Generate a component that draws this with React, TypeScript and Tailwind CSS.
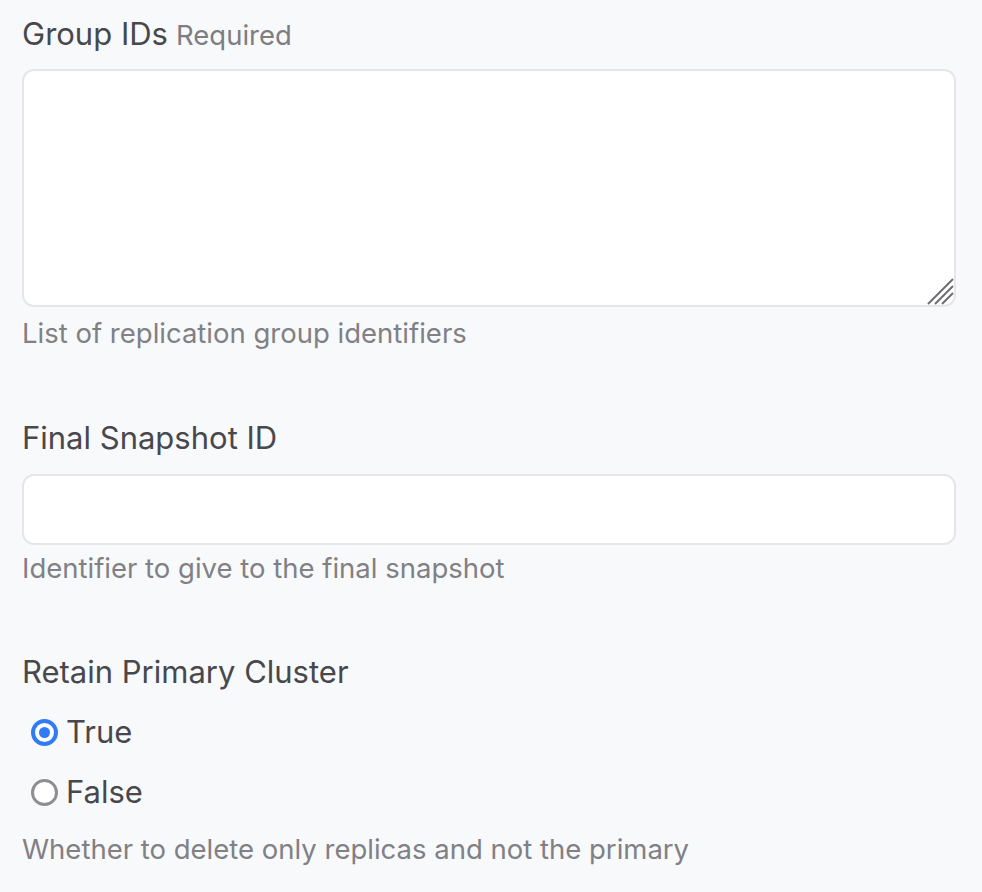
import React from "react";

export default function App() {
  return (
    <div
      className="min-h-[892px] w-full bg-[#f8f9fb] pl-[22px] pr-[26px] pt-[14px] pb-[20px] text-[#48484c]"
      style={{ fontFamily: "Inter, 'Noto Sans', sans-serif" }}
    >
      {/* Group IDs */}
      <div className="flex h-[40px] items-center gap-[8px]">
        <span className="text-[31px] leading-[40px]">Group IDs</span>
        <span className="mt-[2px] text-[27.5px] leading-[40px] text-[#7d7d82]">Required</span>
      </div>
      <div className="relative mt-[15px]">
        <textarea className="block h-[238px] w-full resize-none rounded-[12px] border-2 border-[#e6e6ea] bg-white outline-none" />
        <svg className="pointer-events-none absolute right-[2px] bottom-[2px]" width="28" height="28" viewBox="0 0 28 28">
          <path d="M2 27 L27 2 M9 27 L27 9 M16 27 L27 16" stroke="#6e6e72" strokeWidth="2" />
        </svg>
      </div>
      <p className="mt-[8px] h-[36px] text-[27.5px] leading-[36px] text-[#808085]">List of replication group identifiers</p>

      {/* Final Snapshot ID */}
      <div className="mt-[67px] h-[40px] text-[31px] leading-[40px]">Final Snapshot ID</div>
      <input className="mt-[16px] block h-[71px] w-full rounded-[12px] border-2 border-[#e6e6ea] bg-white outline-none" />
      <p className="mt-[5px] h-[36px] text-[27.5px] leading-[36px] text-[#808085]">Identifier to give to the final snapshot</p>

      {/* Retain Primary Cluster */}
      <div className="mt-[66px] h-[40px] text-[31px] leading-[40px]">Retain Primary Cluster</div>
      <div className="mt-[10px] flex flex-col">
        <label className="flex h-[60px] items-center gap-[8px] pl-[9px]">
          <span className="flex h-[27px] w-[27px] items-center justify-center rounded-full border-[4px] border-[#2f7cf6] bg-white">
            <span className="h-[11px] w-[11px] rounded-full bg-[#2f7cf6]" />
          </span>
          <span className="text-[31px] leading-[40px]">True</span>
        </label>
        <label className="flex h-[60px] items-center gap-[8px] pl-[9px]">
          <span className="h-[27px] w-[27px] rounded-full border-[3px] border-[#8e8e93] bg-white" />
          <span className="text-[31px] leading-[40px]">False</span>
        </label>
      </div>
      <p className="mt-[9px] h-[36px] text-[27.5px] leading-[36px] text-[#808085]">Whether to delete only replicas and not the primary</p>
    </div>
  );
}
